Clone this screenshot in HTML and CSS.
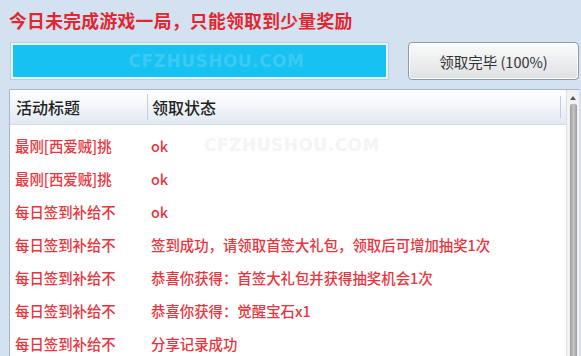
FILE: index.html
```html
<!DOCTYPE html>
<html lang="zh-CN">
<head>
<meta charset="utf-8">
<title>领取奖励</title>
<link rel="stylesheet" href="styles.css">
</head>
<body>
<div class="win">
  <div class="title">今日未完成游戏一局，只能领取到少量奖励</div>
  <div class="toprow">
    <div class="progress"><div class="fill"><span class="wm">CFZHUSHOU.COM</span></div></div>
    <div class="btn">领取完毕 (100%)</div>
  </div>
  <div class="list">
    <div class="content">
      <div class="head">
        <div class="c1">活动标题</div>
        <div class="sep"></div>
        <div class="c2">领取状态</div>
        <div class="sep2"></div>
      </div>
      <div class="rows">
        <span class="wm2">CFZHUSHOU.COM</span>
        <div class="row"><div class="c1">最刚[西爱贼]挑</div><div class="c2">ok</div></div>
        <div class="row"><div class="c1">最刚[西爱贼]挑</div><div class="c2">ok</div></div>
        <div class="row"><div class="c1">每日签到补给不</div><div class="c2">ok</div></div>
        <div class="row"><div class="c1">每日签到补给不</div><div class="c2">签到成功，请领取首签大礼包，领取后可增加抽奖1次</div></div>
        <div class="row"><div class="c1">每日签到补给不</div><div class="c2">恭喜你获得：首签大礼包并获得抽奖机会1次</div></div>
        <div class="row"><div class="c1">每日签到补给不</div><div class="c2">恭喜你获得：觉醒宝石x1</div></div>
        <div class="row"><div class="c1">每日签到补给不</div><div class="c2">分享记录成功</div></div>
      </div>
    </div>
    <div class="scroll">
      <div class="arrow"></div>
      <div class="thumb"></div>
    </div>
  </div>
</div>
</body>
</html>
```
FILE: styles.css
```css
html, body {
  margin: 0;
  padding: 0;
}
body {
  width: 581px;
  height: 356px;
  overflow: hidden;
  background: #d3e1f1;
  font-family: "Noto Sans CJK SC", "DejaVu Sans", sans-serif;
}
.win {
  display: flex;
  flex-direction: column;
  height: 356px;
}
.title {
  flex-shrink: 0;
  padding: 8px 0 0 9px;
  height: 26px;
  font-size: 17.8px;
  line-height: 24px;
  font-weight: 700;
  color: #e2262f;
  letter-spacing: 0.3px;
}
.toprow {
  flex-shrink: 0;
  display: flex;
  align-items: stretch;
  height: 38px;
  margin-top: 8px;
  padding-left: 10px;
}
.progress {
  width: 379px;
  padding: 2px;
  background: #e6f4fb;
  border: 1px solid #b9cfe0;
  box-sizing: border-box;
}
.fill {
  height: 100%;
  background: #17c1f1;
  display: flex;
  align-items: center;
  justify-content: center;
}
.wm {
  font-family: "DejaVu Sans", sans-serif;
  font-weight: 700;
  font-size: 17px;
  color: rgba(255, 255, 255, 0.16);
  letter-spacing: 0.5px;
  margin-left: 34px;
}
.btn {
  margin-left: 19px;
  width: 171px;
  box-sizing: border-box;
  border: 1px solid #8e9aa6;
  border-radius: 4px;
  background: linear-gradient(#fbfbfb, #eceeef 50%, #dfe2e5);
  display: flex;
  align-items: center;
  justify-content: center;
  font-size: 14.5px;
  color: #333;
  box-shadow: inset 0 0 0 1px #ffffff;
  white-space: pre;
}
.list {
  margin: 9px 2px 0 9px;
  flex: 1;
  min-height: 0;
  overflow: hidden;
  display: flex;
  background: #fff;
  border-left: 1px solid #a7b7c8;
  border-top: 1px solid #a7b7c8;
}
.content {
  flex: 1;
  display: flex;
  flex-direction: column;
}
.head {
  flex-shrink: 0;
  height: 34px;
  display: flex;
  align-items: center;
  background: linear-gradient(#ffffff, #f3f6fa 45%, #e1e9f3);
  border-bottom: 1px solid #d6dee8;
  font-size: 16px;
  color: #222;
  font-weight: 500;
}
.head .c1 {
  width: 131px;
  padding-left: 6px;
}
.sep {
  width: 1px;
  height: 26px;
  background: #c5ced8;
}
.head .c2 {
  flex: 1;
  padding-left: 4px;
}
.sep2 {
  width: 1px;
  height: 22px;
  background: #c5ced8;
  margin-right: 5px;
}
.rows {
  position: relative;
  padding-top: 4px;
}
.row {
  height: 33px;
  display: flex;
  align-items: center;
  font-size: 14.4px;
  color: #e8353d;
  font-weight: 500;
}
.row .c1 {
  width: 136px;
  padding-left: 5px;
}
.row .c2 {
  flex: 1;
}
.wm2 {
  position: absolute;
  left: 194px;
  top: 10px;
  font-family: "DejaVu Sans", sans-serif;
  font-weight: 700;
  font-size: 17px;
  color: #f5f5f5;
  letter-spacing: 0.5px;
}
.scroll {
  width: 12px;
  background: #f2f2f2;
  border-left: 1px solid #e0e0e0;
  display: flex;
  flex-direction: column;
  align-items: center;
}
.arrow {
  margin-top: 6px;
  width: 0;
  height: 0;
  border-left: 3px solid transparent;
  border-right: 3px solid transparent;
  border-bottom: 4px solid #555;
}
.thumb {
  margin-top: 4px;
  width: 7px;
  flex: 1;
  background: linear-gradient(90deg, #9a9a9a, #c4c4c4 50%, #9a9a9a);
  border-radius: 2px 2px 0 0;
}
```
